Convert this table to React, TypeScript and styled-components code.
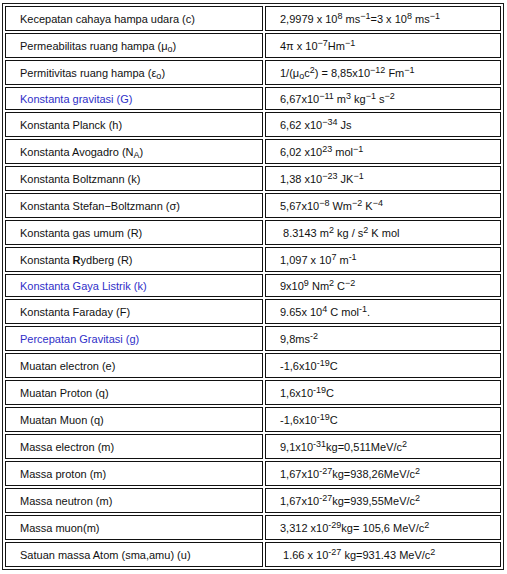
import React from 'react'
import styled, { createGlobalStyle } from 'styled-components'

const GlobalStyle = createGlobalStyle`
  body {
    margin: 0;
    padding: 3px 0 0 2px;
    background: #fff;
    font-family: 'Liberation Sans', Arial, sans-serif;
  }
`

const Table = styled.table`
  width: 502px;
  border-collapse: separate;
  border-spacing: 2px;
  border: 1px solid #1a1a1a;
  font-size: 11px;
  color: #111;
`

const Cell = styled.td<{ $blue?: boolean; $left?: boolean; $short?: boolean }>`
  box-sizing: border-box;
  height: ${(p) => (p.$short ? '23px' : '25px')};
  width: ${(p) => (p.$left ? '258px' : 'auto')};
  padding: 1px 0 0 14px;
  border: 1px solid #111;
  vertical-align: middle;
  white-space: nowrap;
  color: ${(p) => (p.$blue ? '#2f2fc8' : '#111')};
  line-height: 13px;

  sup {
    font-size: 9px;
    line-height: 0;
    vertical-align: 4px;
  }
  sub {
    font-size: 9px;
    line-height: 0;
    vertical-align: -2px;
  }
`

type Row = {
  name: React.ReactNode
  value: React.ReactNode
  blue?: boolean
  short?: boolean
}

const rows: Row[] = [
  {
    name: 'Kecepatan cahaya hampa udara (c)',
    value: (
      <>
        2,9979 x 10<sup>8</sup> ms<sup>−1</sup>=3 x 10<sup>8</sup> ms<sup>−1</sup>
      </>
    ),
  },
  {
    name: (
      <>
        Permeabilitas ruang hampa (μ<sub>o</sub>)
      </>
    ),
    value: (
      <>
        4π x 10<sup>−7</sup>Hm<sup>−1</sup>
      </>
    ),
  },
  {
    name: (
      <>
        Permitivitas ruang hampa (ε<sub>o</sub>)
      </>
    ),
    value: (
      <>
        1/(μ<sub>o</sub>c<sup>2</sup>) = 8,85x10<sup>−12</sup> Fm<sup>−1</sup>
      </>
    ),
  },
  {
    name: 'Konstanta gravitasi (G)',
    blue: true,
    short: true,
    value: (
      <>
        6,67x10<sup>−11</sup> m<sup>3</sup> kg<sup>−1</sup> s<sup>−2</sup>
      </>
    ),
  },
  {
    name: 'Konstanta Planck (h)',
    value: (
      <>
        6,62 x10<sup>−34</sup> Js
      </>
    ),
  },
  {
    name: (
      <>
        Konstanta Avogadro (N<sub>A</sub>)
      </>
    ),
    value: (
      <>
        6,02 x10<sup>23</sup> mol<sup>−1</sup>
      </>
    ),
  },
  {
    name: 'Konstanta Boltzmann (k)',
    value: (
      <>
        1,38 x10<sup>−23</sup> JK<sup>−1</sup>
      </>
    ),
  },
  {
    name: 'Konstanta Stefan−Boltzmann (σ)',
    value: (
      <>
        5,67x10<sup>−8</sup> Wm<sup>−2</sup> K<sup>−4</sup>
      </>
    ),
  },
  {
    name: 'Konstanta gas umum (R)',
    value: (
      <>
        {'\u00a0'}8.3143 m<sup>2</sup> kg / s<sup>2</sup> K mol
      </>
    ),
  },
  {
    name: (
      <>
        Konstanta <b>R</b>ydberg (R)
      </>
    ),
    value: (
      <>
        1,097 x 10<sup>7</sup> m<sup>-1</sup>
      </>
    ),
  },
  {
    name: 'Konstanta Gaya Listrik (k)',
    blue: true,
    short: true,
    value: (
      <>
        9x10<sup>9</sup> Nm<sup>2</sup> C<sup>−2</sup>
      </>
    ),
  },
  {
    name: 'Konstanta Faraday (F)',
    value: (
      <>
        9.65x 10<sup>4</sup> C mol<sup>-1</sup>.
      </>
    ),
  },
  {
    name: 'Percepatan Gravitasi (g)',
    blue: true,
    value: (
      <>
        9,8ms<sup>-2</sup>
      </>
    ),
  },
  {
    name: 'Muatan electron (e)',
    value: (
      <>
        -1,6x10<sup>-19</sup>C
      </>
    ),
  },
  {
    name: 'Muatan Proton (q)',
    value: (
      <>
        1,6x10<sup>-19</sup>C
      </>
    ),
  },
  {
    name: 'Muatan Muon (q)',
    value: (
      <>
        -1,6x10<sup>-19</sup>C
      </>
    ),
  },
  {
    name: 'Massa electron (m)',
    value: (
      <>
        9,1x10<sup>-31</sup>kg=0,511MeV/c<sup>2</sup>
      </>
    ),
  },
  {
    name: 'Massa proton (m)',
    value: (
      <>
        1,67x10<sup>-27</sup>kg=938,26MeV/c<sup>2</sup>
      </>
    ),
  },
  {
    name: 'Massa neutron (m)',
    value: (
      <>
        1,67x10<sup>-27</sup>kg=939,55MeV/c<sup>2</sup>
      </>
    ),
  },
  {
    name: 'Massa muon(m)',
    value: (
      <>
        3,312 x10<sup>-29</sup>kg= 105,6 MeV/c<sup>2</sup>
      </>
    ),
  },
  {
    name: 'Satuan massa Atom (sma,amu) (u)',
    value: (
      <>
        {'\u00a0'}1.66 x 10<sup>-27</sup> kg=931.43 MeV/c<sup>2</sup>
      </>
    ),
  },
]

export default function App() {
  return (
    <>
      <GlobalStyle />
      <Table>
        <tbody>
          {rows.map((r, i) => (
            <tr key={i}>
              <Cell $left $blue={r.blue} $short={r.short}>
                {r.name}
              </Cell>
              <Cell $short={r.short}>{r.value}</Cell>
            </tr>
          ))}
        </tbody>
      </Table>
    </>
  )
}
